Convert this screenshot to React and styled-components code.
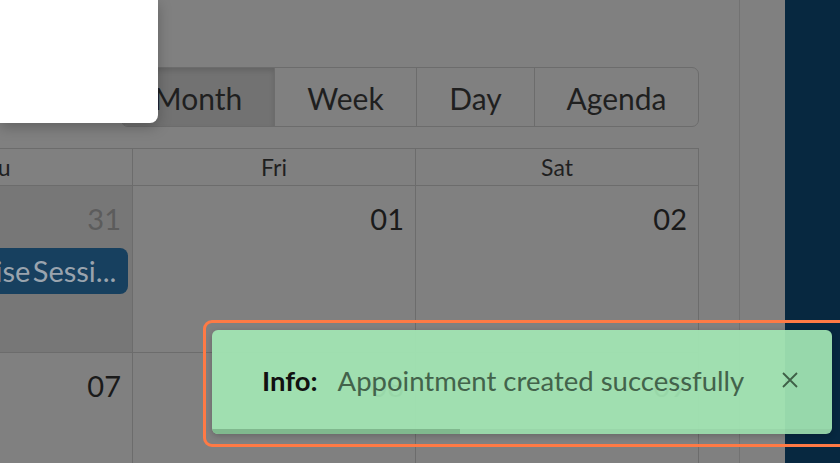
import React from 'react';
import styled, { createGlobalStyle } from 'styled-components';

const GlobalStyle = createGlobalStyle`
  html, body {
    margin: 0;
    padding: 0;
    overflow: hidden;
  }
  body {
    font-family: 'Lato', 'Open Sans', sans-serif;
  }
`;

const views = [
  { label: 'Month', width: 152, active: true },
  { label: 'Week', width: 142 },
  { label: 'Day', width: 118 },
  { label: 'Agenda', width: 164 },
];

// long titles get cut down for the month cells
const shorten = (title, max) => (title.length > max ? title.slice(0, max) + '...' : title);

const App = () => {
  return (
    <>
      <GlobalStyle />
      <Page>
        <Main>
          <Toolbar>
            {views.map((v) => (
              <ViewButton key={v.label} $w={v.width} $active={v.active}>
                {v.label}
              </ViewButton>
            ))}
          </Toolbar>

          <Calendar>
            <HeaderRow>
              <HeaderCell>Thu</HeaderCell>
              <HeaderCell>Fri</HeaderCell>
              <HeaderCell>Sat</HeaderCell>
            </HeaderRow>
            <WeekRow $h={166}>
              <DayCell $offRange>
                <DateLabel $muted>31</DateLabel>
                <EventPill>{shorten('Gym Exercise Session', 18)}</EventPill>
              </DayCell>
              <DayCell>
                <DateLabel>01</DateLabel>
              </DayCell>
              <DayCell>
                <DateLabel>02</DateLabel>
              </DayCell>
            </WeekRow>
            <WeekRow $h={120}>
              <DayCell>
                <DateLabel>07</DateLabel>
              </DayCell>
              <DayCell>
                <DateLabel>08</DateLabel>
              </DayCell>
              <DayCell>
                <DateLabel>09</DateLabel>
              </DayCell>
            </WeekRow>
          </Calendar>

          <PopupCard />
        </Main>
        <Gutter />
        <Sidebar />

        <Highlight />
        <Toast>
          <ToastBody>
            <ToastTitle>Info:</ToastTitle>
            <ToastMessage>Appointment created successfully</ToastMessage>
          </ToastBody>
          <CloseButton aria-label="close">
            <svg width="18" height="18" viewBox="0 0 18 18">
              <path d="M2 2 L16 16 M16 2 L2 16" stroke="#3f5f47" strokeWidth="1.8" fill="none" />
            </svg>
          </CloseButton>
          <ProgressTrack>
            <ProgressFill style={{ width: `${(248 / 620) * 100}%` }} />
          </ProgressTrack>
        </Toast>
      </Page>
    </>
  );
};

export default App;

const Page = styled.div`
  position: relative;
  width: 840px;
  height: 463px;
  display: flex;
  overflow: hidden;
  background: #808080;
`;

const Main = styled.div`
  position: relative;
  width: 740px;
  flex-shrink: 0;
  border-right: 1px solid #727272;
  padding: 67px 40px 0 0;
  box-sizing: border-box;
  display: flex;
  flex-direction: column;
  align-items: flex-end;
  overflow: hidden;
`;

const Gutter = styled.div`
  width: 45px;
  flex-shrink: 0;
  background: #808080;
`;

const Sidebar = styled.div`
  flex: 1;
  background: #072840;
`;

const Toolbar = styled.div`
  display: flex;
  height: 58px;
  border: 1px solid #6c6c6c;
  border-radius: 7px;
  overflow: hidden;
  flex-shrink: 0;
`;

const ViewButton = styled.button`
  width: ${(p) => p.$w}px;
  border: none;
  border-left: 1px solid #6c6c6c;
  background: ${(p) => (p.$active ? '#727272' : 'transparent')};
  box-shadow: ${(p) => (p.$active ? 'inset 0 3px 5px rgba(0,0,0,0.12)' : 'none')};
  font-family: 'Lato', sans-serif;
  font-size: 30px;
  color: #1f1f1f;
  padding: 2px 0 0;
  &:first-child {
    border-left: none;
  }
`;

const Calendar = styled.div`
  margin-top: 21px;
  width: 849px;
  flex-shrink: 0;
  border-right: 1px solid #6c6c6c;
  border-top: 1px solid #6c6c6c;
`;

const HeaderRow = styled.div`
  display: grid;
  grid-template-columns: repeat(3, 1fr);
  height: 36px;
  border-bottom: 1px solid #6c6c6c;
`;

const HeaderCell = styled.div`
  display: flex;
  align-items: center;
  justify-content: center;
  font-size: 23px;
  color: #1f1f1f;
  border-left: 1px solid #6c6c6c;
`;

const WeekRow = styled.div`
  display: grid;
  grid-template-columns: repeat(3, 1fr);
  height: ${(p) => p.$h}px;
  border-bottom: 1px solid #6c6c6c;
`;

const DayCell = styled.div`
  display: flex;
  flex-direction: column;
  align-items: stretch;
  min-width: 0;
  background: ${(p) => (p.$offRange ? '#777777' : 'transparent')};
  border-left: 1px solid #6c6c6c;
  padding: 13px 11px 0 4px;
`;

const DateLabel = styled.div`
  text-align: right;
  font-size: 29px;
  line-height: 40px;
  color: ${(p) => (p.$muted ? '#5c5c5c' : '#1a1a1a')};
`;

const EventPill = styled.div`
  margin: 9px -7px 0 0;
  height: 46px;
  line-height: 46px;
  padding: 0 8px 0 10px;
  border-radius: 8px;
  background: #17405f;
  color: #9aa4ae;
  font-size: 29px;
  word-spacing: -5px;
  white-space: nowrap;
  overflow: hidden;
`;

const PopupCard = styled.div`
  position: absolute;
  left: 0;
  top: 0;
  width: 158px;
  height: 123px;
  background: #ffffff;
  border-bottom-right-radius: 8px;
  box-shadow: 0 4px 14px rgba(0, 0, 0, 0.25);
`;

const Highlight = styled.div`
  position: absolute;
  left: 203px;
  top: 320px;
  width: 660px;
  height: 127px;
  box-sizing: border-box;
  border: 3px solid #ff7a45;
  border-radius: 9px;
  pointer-events: none;
`;

const Toast = styled.div`
  position: absolute;
  left: 212px;
  top: 330px;
  width: 620px;
  height: 104px;
  box-sizing: border-box;
  border-radius: 6px;
  background: rgba(162, 230, 180, 0.93);
  box-shadow: 0 2px 6px rgba(0, 0, 0, 0.2);
  display: flex;
  align-items: center;
  padding: 0 31px 4px 50px;
  overflow: hidden;
`;

const ToastBody = styled.div`
  flex: 1;
  display: flex;
  align-items: baseline;
  gap: 20px;
  font-size: 27.5px;
`;

const ToastTitle = styled.span`
  font-weight: 700;
  color: #111111;
`;

const ToastMessage = styled.span`
  color: #43634b;
`;

const CloseButton = styled.button`
  border: none;
  background: transparent;
  padding: 0;
  display: flex;
  align-items: center;
  justify-content: center;
  width: 22px;
  height: 22px;
`;

const ProgressTrack = styled.div`
  position: absolute;
  left: 0;
  right: 0;
  bottom: 0;
  height: 5px;
  background: rgba(0, 0, 0, 0.04);
`;

const ProgressFill = styled.div`
  height: 100%;
  background: #80b98e;
`;
